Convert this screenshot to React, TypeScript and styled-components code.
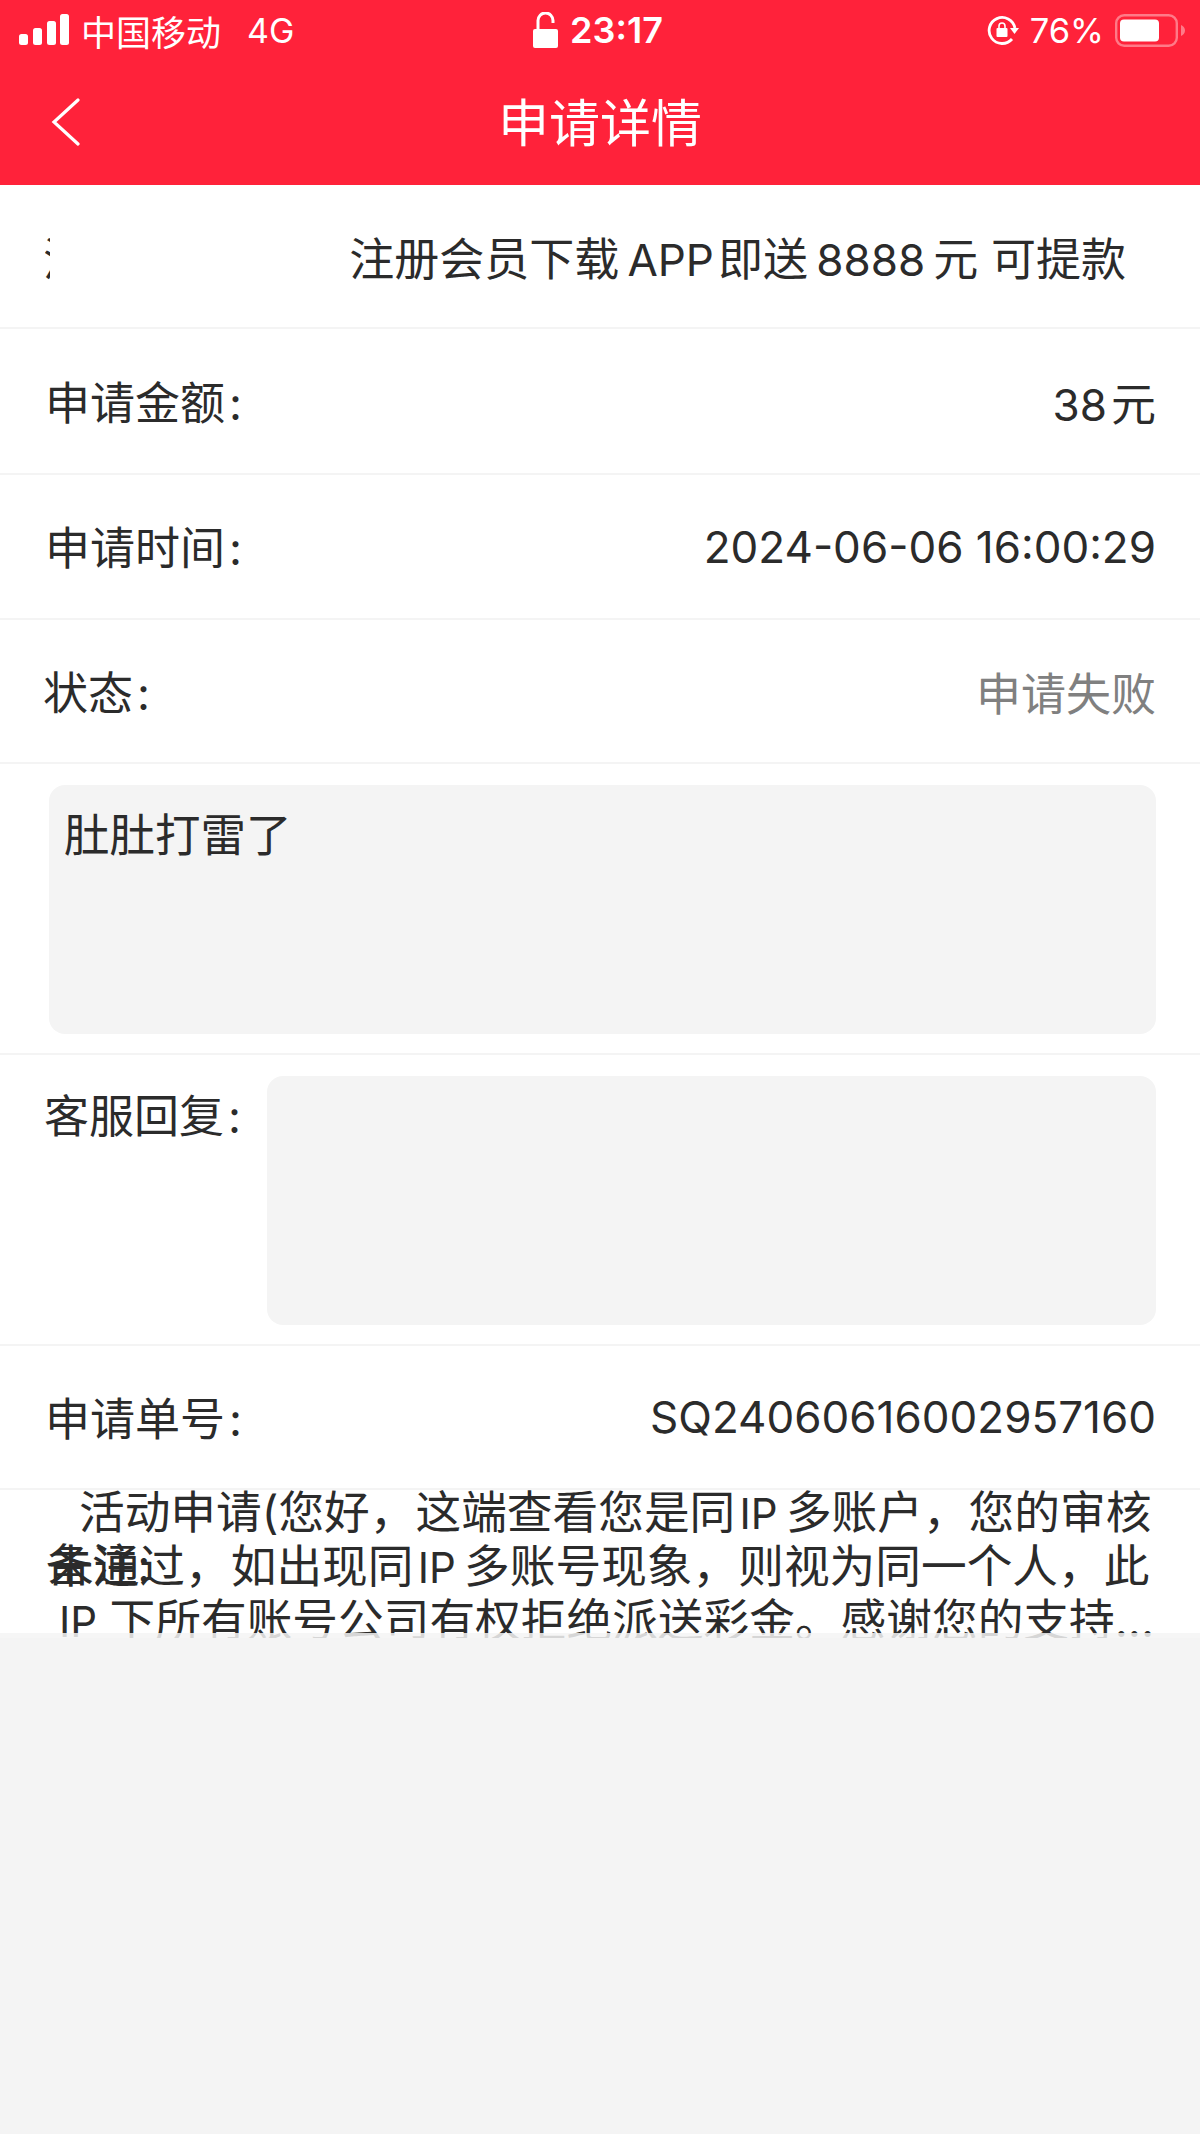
import React from "react";
import styled, { createGlobalStyle } from "styled-components";

const GlobalStyle = createGlobalStyle`
  html, body {
    margin: 0;
    padding: 0;
    background: #f4f4f4;
  }
  body {
    font-family: Inter, "Noto Sans CJK SC", sans-serif;
    color: #2b2b2b;
  }
`;

const Page = styled.div`
  width: 1200px;
  height: 2134px;
  background: #f4f4f4;
  overflow: hidden;
`;

const Header = styled.header`
  height: 185px;
  background: #ff223a;
  color: #fff;
`;

const StatusBar = styled.div`
  height: 60px;
  padding: 0 15px 0 19px;
  display: grid;
  grid-template-columns: 1fr auto 1fr;
  align-items: center;
  font-size: 34px;
`;

const StatusLeft = styled.div`
  display: flex;
  align-items: center;
  gap: 12px;
`;

const Carrier = styled.span`
  margin-right: 14px;
  font-size: 35px;
`;

const StatusCenter = styled.div`
  display: flex;
  align-items: center;
  gap: 12px;
  margin-right: 8px;
  font-size: 36px;
  font-weight: 600;
`;

const StatusRight = styled.div`
  display: flex;
  align-items: center;
  justify-content: flex-end;
  gap: 11px;
  font-size: 34.500px;
`;

const NavBar = styled.div`
  position: relative;
  height: 125px;
  padding-bottom: 6px;
  box-sizing: border-box;
  display: flex;
  align-items: center;
  justify-content: center;
  font-size: 51px;
`;

const BackIcon = styled.svg`
  position: absolute;
  left: 50px;
  top: 36px;
`;

const Row = styled.div<{ $h: number; $left?: number }>`
  height: ${(p) => p.$h}px;
  box-sizing: border-box;
  background: #fff;
  border-bottom: 2px solid #f4f4f4;
  padding: 0 44px 0 ${(p) => p.$left ?? 45}px;
  display: flex;
  align-items: center;
  justify-content: space-between;
  font-size: 45px;
`;

const Clipped = styled.span`
  display: block;
  width: 5px;
  overflow: hidden;
  white-space: nowrap;
  text-indent: -2px;
`;

const Title = styled.span`
  margin-right: 30px;
`;

const Label = styled.span`
  position: relative;
  top: -1px;
`;

const Latin = styled.span`
  font-size: 44px;
`;

const Value = styled.span<{ $muted?: boolean; $latin?: boolean }>`
  color: ${(p) => (p.$muted ? "#808080" : "#2b2b2b")};
  font-size: ${(p) => (p.$latin ? "44px" : "45px")};
`;

const BoxRow = styled.div`
  height: 291px;
  box-sizing: border-box;
  background: #fff;
  border-bottom: 2px solid #f4f4f4;
  padding: 21px 44px 19px 49px;
`;

const Box = styled.div`
  height: 100%;
  box-sizing: border-box;
  background: #f4f4f4;
  border-radius: 16px;
  padding: 23px 15px;
  font-size: 45.500px;
  line-height: 56px;
`;

const ReplyRow = styled.div`
  height: 291px;
  box-sizing: border-box;
  background: #fff;
  border-bottom: 2px solid #f4f4f4;
  padding: 21px 44px 19px 44px;
  display: flex;
  gap: 23px;
  font-size: 45px;
`;

const ReplyLabel = styled.span`
  flex: none;
  width: 200px;
  padding-top: 13px;
  line-height: 56px;
  white-space: nowrap;
`;

const ReplyBox = styled.div`
  flex: 1;
  background: #f4f4f4;
  border-radius: 16px;
`;

const Note = styled.div`
  position: relative;
  height: 148px;
  background: #fff;
  overflow: hidden;
  padding-left: 48px;
  font-size: 45.700px;
  line-height: 53px;
`;

const NoteLabel = styled.span`
  position: absolute;
  left: 46px;
  top: 49px;
`;

const NoteLine = styled.div<{ $indent?: number; $shift?: number }>`
  white-space: nowrap;
  margin-left: ${(p) => p.$indent ?? 0}px;
  margin-top: ${(p) => p.$shift ?? 0}px;
`;

const NoteLatin = styled.span`
  font-size: 42px;
`;

const NoteFade = styled.div`
  position: absolute;
  left: 0;
  right: 0;
  bottom: 0;
  height: 5px;
  background: rgba(244, 244, 244, 0.85);
`;

const Signal = () => (
  <svg width="50" height="32" viewBox="0 0 50 32" fill="#fff">
    <rect x="0" y="20" width="9" height="11" rx="2.500" />
    <rect x="14" y="14" width="9" height="17" rx="2.500" />
    <rect x="28" y="7" width="9" height="24" rx="2.500" />
    <rect x="41" y="0" width="9" height="31" rx="2.500" />
  </svg>
);

const Lock = () => (
  <svg width="25" height="36" viewBox="0 0 25 36" fill="#fff">
    <rect x="0" y="17" width="25" height="19" rx="2" />
    <path d="M5 17V8.500a7.500 7.500 0 0 1 15 0v2.500" fill="none" stroke="#fff" strokeWidth="3" />
  </svg>
);

const RotationLock = () => (
  <svg width="32" height="32" viewBox="0 0 32 32">
    <path d="M27.900 14A13 13 0 1 0 25 25" fill="none" stroke="#fff" strokeWidth="2.800" />
    <path d="M23 14h9l-4.500 6z" fill="#fff" />
    <rect x="9.500" y="14" width="11" height="9" rx="1" fill="#fff" />
    <path d="M12 14v-2a3 3 0 0 1 6 0v2" fill="none" stroke="#fff" strokeWidth="1.600" />
  </svg>
);

const Battery = () => (
  <svg width="70" height="33" viewBox="0 0 70 33">
    <rect x="1.200" y="1.200" width="60.600" height="30.600" rx="8" fill="none" stroke="#ff7a88" strokeWidth="2.400" />
    <rect x="5" y="5.500" width="39" height="22" rx="4" fill="#fff" />
    <path d="M66 11c2.500 1 4 3 4 5.500s-1.500 4.500-4 5.500z" fill="#ff7a88" />
  </svg>
);

const HAIR = "\u200a";
const THIN = "\u2009";

export default function App() {
  return (
    <Page>
      <GlobalStyle />
      <Header>
        <StatusBar>
          <StatusLeft>
            <Signal />
            <Carrier>中国移动</Carrier>
            <span>4G</span>
          </StatusLeft>
          <StatusCenter>
            <Lock />
            <span>23:17</span>
          </StatusCenter>
          <StatusRight>
            <RotationLock />
            <span>76%</span>
            <Battery />
          </StatusRight>
        </StatusBar>
        <NavBar>
          <BackIcon width="32" height="50" viewBox="0 0 32 50">
            <path d="M28 4 4 26l24 22" fill="none" stroke="#fff" strokeWidth="3.200" strokeLinecap="round" />
          </BackIcon>
          申请详情
        </NavBar>
      </Header>
      <Row $h={144}>
        <Clipped>活</Clipped>
        <Title>
          注册会员下载{THIN}<Latin>APP</Latin>{HAIR}即送{THIN}<Latin>8888</Latin>{THIN}元 可提款
        </Title>
      </Row>
      <Row $h={146}>
        <Label>申请金额{HAIR}:</Label>
        <Value><Latin>38</Latin>{HAIR}元</Value>
      </Row>
      <Row $h={145}>
        <Label>申请时间{HAIR}:</Label>
        <Value $latin>2024-06-06 16:00:29</Value>
      </Row>
      <Row $h={144} $left={43}>
        <Label>状态{HAIR}:</Label>
        <Value $muted>申请失败</Value>
      </Row>
      <BoxRow>
        <Box>肚肚打雷了</Box>
      </BoxRow>
      <ReplyRow>
        <ReplyLabel>客服回复{HAIR}:</ReplyLabel>
        <ReplyBox />
      </ReplyRow>
      <Row $h={144}>
        <Label>申请单号{HAIR}:</Label>
        <Value $latin>SQ24060616002957160</Value>
      </Row>
      <Note>
        <NoteLine $indent={31} $shift={-4}>
          活动申请(您好，这端查看您是同{HAIR}<NoteLatin>IP</NoteLatin>{THIN}多账户，您的审核
        </NoteLine>
        <NoteLine>未通过，如出现同{HAIR}<NoteLatin>IP</NoteLatin>{THIN}多账号现象，则视为同一个人，此</NoteLine>
        <NoteLine $indent={11}><NoteLatin>IP</NoteLatin>{THIN}{HAIR}下所有账号公司有权拒绝派送彩金。感谢您的支持...</NoteLine>
        <NoteLabel>备注:</NoteLabel>
        <NoteFade />
      </Note>
    </Page>
  );
}
